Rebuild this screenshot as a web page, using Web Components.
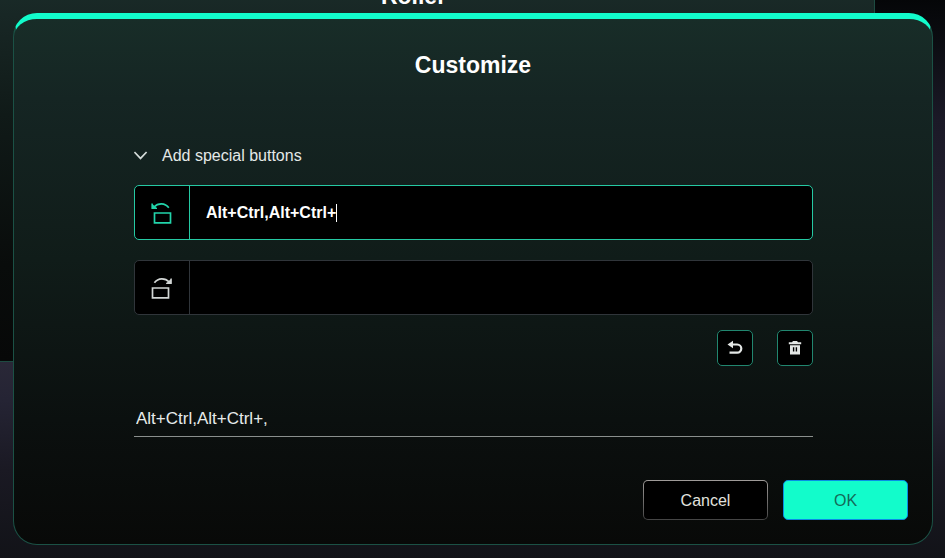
<!DOCTYPE html>
<html lang="en">
<head>
<meta charset="utf-8">
<meta name="viewport" content="width=device-width, initial-scale=1">
<title>Customize</title>
<style>
    body {
        margin: 0;
        min-height: 100vh;
        position: relative;
        overflow: hidden;
        font-family: "Liberation Sans", Arial, sans-serif;
        font-size: 16px;
        color: #fff;
        background: linear-gradient(#050608 0, #0b0c11 40px, #1b1927 120px, #2c2a39 340px, #252434 400px, #1a1923 470px, #121318 100%);
        --accent: #12fccb;
        --line: #1d4b41;
    }
</style>
</head>
<body>
    <settings-panel>Roller</settings-panel>

    <modal-dialog heading="Customize">
        <special-section label="Add special buttons">
            <key-field direction="left" label="Roll left" value="Alt+Ctrl,Alt+Ctrl+" active></key-field>
            <key-field direction="right" label="Roll right"></key-field>
            <tool-bar></tool-bar>
        </special-section>
        <line-input label="Result" value="Alt+Ctrl,Alt+Ctrl+,"></line-input>
        <action-button slot="actions">Cancel</action-button>
        <action-button slot="actions" primary>OK</action-button>
    </modal-dialog>

<script>
class SettingsPanel extends HTMLElement {
    constructor() {
        super();
        this.attachShadow({ mode: 'open' });
    }

    connectedCallback() {
        this.shadowRoot.innerHTML = `
            <style>
                :host {
                    position: absolute;
                    top: -16px;
                    left: -48px;
                    right: 70px;
                    height: 378px;
                    box-sizing: border-box;
                    border: 1px solid var(--line);
                    background: linear-gradient(#1a2c29 0, #182725 30px, #101a18 130px, #090c0b 280px, #070808 100%);
                    text-align: center;
                }

                h2 {
                    margin: 0;
                    font-size: 23px;
                    line-height: 22px;
                }
            </style>
            <h2><slot></slot></h2>
        `;
    }
}

class ModalDialog extends HTMLElement {
    constructor() {
        super();
        this.attachShadow({ mode: 'open' });
    }

    connectedCallback() {
        this.shadowRoot.innerHTML = `
            <style>
                :host {
                    display: block;
                    position: relative;
                    margin: 13px 12px 12px 13px;
                    padding: 32px 24px 24px;
                    border: 1px solid #1b5145;
                    border-top: 6px solid var(--accent);
                    border-radius: 24px;
                    background: linear-gradient(#182d28 0, #152523 80px, #101c19 240px, #0b100f 400px, #080908 100%);
                }

                h1 {
                    margin: 0 0 65px;
                    font-size: 23px;
                    line-height: 28px;
                    text-align: center;
                }

                .body {
                    display: flex;
                    flex-direction: column;
                    gap: 40px;
                    padding: 0 95px 0 96px;
                }

                .actions {
                    display: flex;
                    justify-content: flex-end;
                    gap: 15px;
                    margin-top: 43px;
                }
            </style>
            <section role="dialog" aria-labelledby="title">
                <h1 id="title"></h1>
                <div class="body"><slot></slot></div>
                <div class="actions"><slot name="actions"></slot></div>
            </section>
        `;
        this.shadowRoot.querySelector('h1').textContent = this.getAttribute('heading');
    }
}

class SpecialSection extends HTMLElement {
    constructor() {
        super();
        this.attachShadow({ mode: 'open' });
    }

    connectedCallback() {
        this.shadowRoot.innerHTML = `
            <style>
                :host {
                    display: flex;
                    flex-direction: column;
                }

                .toggle {
                    display: flex;
                    align-items: center;
                    align-self: flex-start;
                    gap: 14px;
                    margin-bottom: 17px;
                    padding: 0;
                    border: 0;
                    background: none;
                    color: #e4e9e8;
                    font-family: inherit;
                    font-size: 16px;
                    line-height: 24px;
                    cursor: pointer;
                }

                .content {
                    display: flex;
                    flex-direction: column;
                    gap: 20px;
                }

                .content[hidden] {
                    display: none;
                }
            </style>
            <button class="toggle" type="button" aria-expanded="true">
                <svg width="14" height="10" viewBox="0 0 14 10" fill="none" stroke="#d5dcda" stroke-width="1.7"><path d="M.4 1 6.5 7.4 12.6 1"/></svg>
                <span></span>
            </button>
            <div class="content"><slot></slot></div>
        `;
        this.shadowRoot.querySelector('span').textContent = this.getAttribute('label');

        const toggle = this.shadowRoot.querySelector('.toggle');
        const content = this.shadowRoot.querySelector('.content');
        toggle.addEventListener('click', () => {
            content.hidden = !content.hidden;
            toggle.setAttribute('aria-expanded', String(!content.hidden));
        });
    }
}

class KeyField extends HTMLElement {
    constructor() {
        super();
        this.attachShadow({ mode: 'open' });
    }

    connectedCallback() {
        const icons = {
            left: '<path d="M3.5 12h16v9.8h-16z"/><path d="M3 6C7 1.8 14 1.5 17.8 6.8"/><path d="M.8 2.6v5h5.4z" fill="currentColor" stroke="none"/><path d="M1.1 2.4v4.9h4.9" stroke-width="1.3"/>',
            right: '<path d="M1.5 12h16v9.8h-16z"/><path d="M3.4 6.8C7.2 1.5 14.2 1.8 18.2 6"/><path d="M20.4 2.6v5H15z" fill="currentColor" stroke="none"/><path d="M20.1 2.4v4.9h-4.9" stroke-width="1.3"/>'
        };
        this.shadowRoot.innerHTML = `
            <style>
                :host {
                    display: flex;
                    height: 55px;
                    box-sizing: border-box;
                    overflow: hidden;
                    border: 1px solid #30353a;
                    border-radius: 5px;
                    background: #000;
                    color: #d2d6d5;
                    --divider: #30353a;
                }

                :host([active]) {
                    border-color: #25c9a3;
                    color: #22d4aa;
                    --divider: #25c9a3;
                }

                label {
                    display: flex;
                    align-items: center;
                    justify-content: center;
                    width: 54px;
                    border-right: 1px solid var(--divider);
                }

                .text {
                    display: flex;
                    flex: 1;
                    align-items: center;
                    padding: 0 16px;
                }

                input {
                    flex: 1;
                    min-width: 0;
                    padding: 0;
                    border: 0;
                    outline: 0;
                    background: none;
                    color: #fff;
                    font-family: inherit;
                    font-size: 16px;
                    font-weight: bold;
                    line-height: 24px;
                }

                :host([active]) input {
                    flex: none;
                    field-sizing: content;
                    caret-color: transparent;
                }

                .caret {
                    display: none;
                    width: 1px;
                    height: 18px;
                    background: #fff;
                }

                :host([active]) .caret {
                    display: block;
                }
            </style>
            <label for="keys">
                <svg width="22" height="24" viewBox="0 0 22 24" fill="none" stroke="currentColor" stroke-width="1.7" aria-hidden="true">${icons[this.getAttribute('direction')]}</svg>
            </label>
            <div class="text"><input id="keys" type="text"><span class="caret"></span></div>
        `;
        const input = this.shadowRoot.querySelector('input');
        input.value = this.getAttribute('value') || '';
        input.setAttribute('aria-label', this.getAttribute('label'));
    }
}

class ToolBar extends HTMLElement {
    constructor() {
        super();
        this.attachShadow({ mode: 'open' });
    }

    connectedCallback() {
        this.shadowRoot.innerHTML = `
            <style>
                :host {
                    display: flex;
                    justify-content: flex-end;
                    gap: 24px;
                    margin-top: -5px;
                }

                button {
                    display: flex;
                    align-items: center;
                    justify-content: center;
                    width: 36px;
                    height: 36px;
                    padding: 0;
                    border: 1px solid #21866f;
                    border-radius: 5px;
                    background: #000;
                    color: #e4e7e6;
                    cursor: pointer;
                }
            </style>
            <button type="button" aria-label="Undo">
                <svg width="16" height="16" viewBox="0 0 16 16"><path d="M4 4.5h6.2a4.1 4.1 0 0 1 0 8.2H2.5" fill="none" stroke="currentColor" stroke-width="2.2"/><path d="M.5 4.5 6 .8v7.4z" fill="currentColor"/></svg>
            </button>
            <button type="button" aria-label="Delete">
                <svg width="14" height="16" viewBox="0 0 14 16"><path d="M5 1h4l1 1.3h3.2v2H.8v-2H4z" fill="currentColor"/><path fill-rule="evenodd" d="M2 5.2h10v9.2H2zM4.9 7.3v4.2h1.4V7.3zm2.8 0v4.2h1.4V7.3z" fill="currentColor"/></svg>
            </button>
        `;
    }
}

class LineInput extends HTMLElement {
    constructor() {
        super();
        this.attachShadow({ mode: 'open' });
    }

    connectedCallback() {
        this.shadowRoot.innerHTML = `
            <style>
                :host {
                    display: block;
                }

                input {
                    display: block;
                    width: 100%;
                    height: 31px;
                    box-sizing: border-box;
                    padding: 0 2px 4px;
                    border: 0;
                    border-bottom: 1px solid #8a8f8d;
                    outline: 0;
                    background: none;
                    color: #e6ebea;
                    font-family: inherit;
                    font-size: 17px;
                }
            </style>
            <input type="text">
        `;
        const input = this.shadowRoot.querySelector('input');
        input.value = this.getAttribute('value');
        input.setAttribute('aria-label', this.getAttribute('label'));
    }
}

class ActionButton extends HTMLElement {
    constructor() {
        super();
        this.attachShadow({ mode: 'open' });
    }

    connectedCallback() {
        this.shadowRoot.innerHTML = `
            <style>
                :host {
                    display: block;
                }

                button {
                    display: block;
                    width: 125px;
                    height: 40px;
                    padding: 2px 0 0;
                    border: 1px solid transparent;
                    border-radius: 5px;
                    background: linear-gradient(#000, #000) padding-box, linear-gradient(#a09c9a, #444) border-box;
                    color: #e2e2df;
                    font-family: inherit;
                    font-size: 16px;
                    cursor: pointer;
                }

                :host([primary]) button {
                    border-color: #078de5;
                    background: var(--accent);
                    color: #146b59;
                }
            </style>
            <button type="button"><slot></slot></button>
        `;
    }
}

customElements.define('settings-panel', SettingsPanel);
customElements.define('modal-dialog', ModalDialog);
customElements.define('special-section', SpecialSection);
customElements.define('key-field', KeyField);
customElements.define('tool-bar', ToolBar);
customElements.define('line-input', LineInput);
customElements.define('action-button', ActionButton);
</script>
</body>
</html>
